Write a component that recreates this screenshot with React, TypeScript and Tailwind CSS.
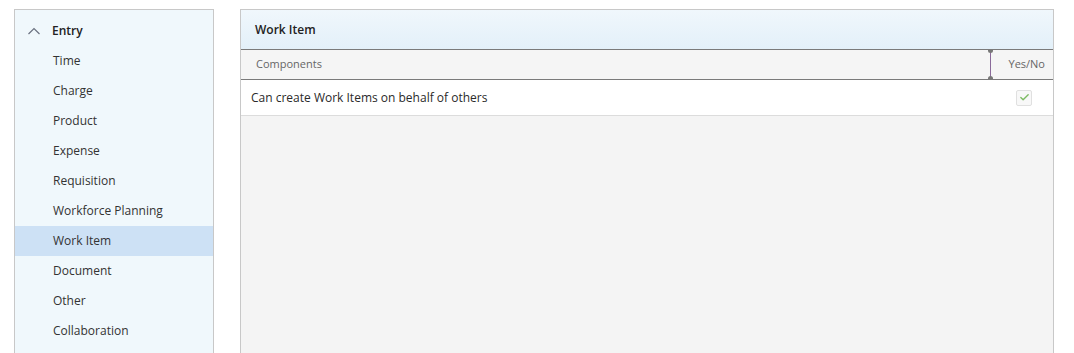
import { Check } from 'lucide-react'

const items = [
  'Time',
  'Charge',
  'Product',
  'Expense',
  'Requisition',
  'Workforce Planning',
  'Work Item',
  'Document',
  'Other',
  'Collaboration',
]

export default function App() {
  return (
    <div className="flex h-[353px] overflow-hidden bg-white pl-[14px] pt-[9px] font-['Open_Sans',sans-serif] text-[12px] text-[#333]">
      {/* Left nav */}
      <div className="h-[400px] w-[200px] shrink-0 border border-[#c8c8c8] bg-[#f0f8fc]">
        <div className="flex h-[36px] items-center pt-[6px]">
          <svg className="ml-[12px] mr-[11px] h-[14px] w-[14px]" viewBox="0 0 14 14" fill="none" stroke="#6b7280" strokeWidth="1.2">
            <path d="M1.5 10 L7 4.5 L12.5 10" />
          </svg>
          <span className="font-semibold text-[#222]">Entry</span>
        </div>
        {items.map((item) => (
          <div
            key={item}
            className={`flex h-[30px] items-center pl-[38px] ${
              item === 'Work Item' ? 'bg-[#cde1f5]' : ''
            }`}
          >
            {item}
          </div>
        ))}
      </div>

      {/* Right panel */}
      <div className="ml-[26px] flex h-[400px] w-[814px] shrink-0 flex-col border border-[#c8c8c8] bg-[#f4f4f4]">
        <div className="flex h-[39px] items-center bg-gradient-to-b from-[#f0f7fc] to-[#e3f0f9] pl-[14px] font-semibold text-[#222]">
          Work Item
        </div>
        <div className="flex h-[31px] border-y border-[#7a7a7a] bg-[#f5f5f5] text-[11px] text-[#666]">
          <div className="flex flex-1 items-center pl-[15px]">Components</div>
          <div className="relative w-[1px] bg-[#8a6a9a]">
            <div className="absolute -left-[2px] top-0 h-[3px] w-[5px] rounded-b-full bg-[#777]" />
            <div className="absolute -left-[2px] bottom-0 h-[3px] w-[5px] rounded-t-full bg-[#777]" />
          </div>
          <div className="flex w-[62px] items-center justify-end pr-[8px]">Yes/No</div>
        </div>
        <div className="flex h-[36px] items-center border-b border-[#dcdcdc] bg-white">
          <div className="flex-1 pl-[10px] text-[#2a2a2a]">Can create Work Items on behalf of others</div>
          <div className="mr-[21px] flex h-[16px] w-[16px] items-center justify-center rounded-[2px] border border-[#e0e0e0] bg-[#f8f8f8]">
            <Check className="h-[11px] w-[11px] text-[#7dbb63]" strokeWidth={3} />
          </div>
        </div>
        <div className="flex-1" />
      </div>
    </div>
  )
}
